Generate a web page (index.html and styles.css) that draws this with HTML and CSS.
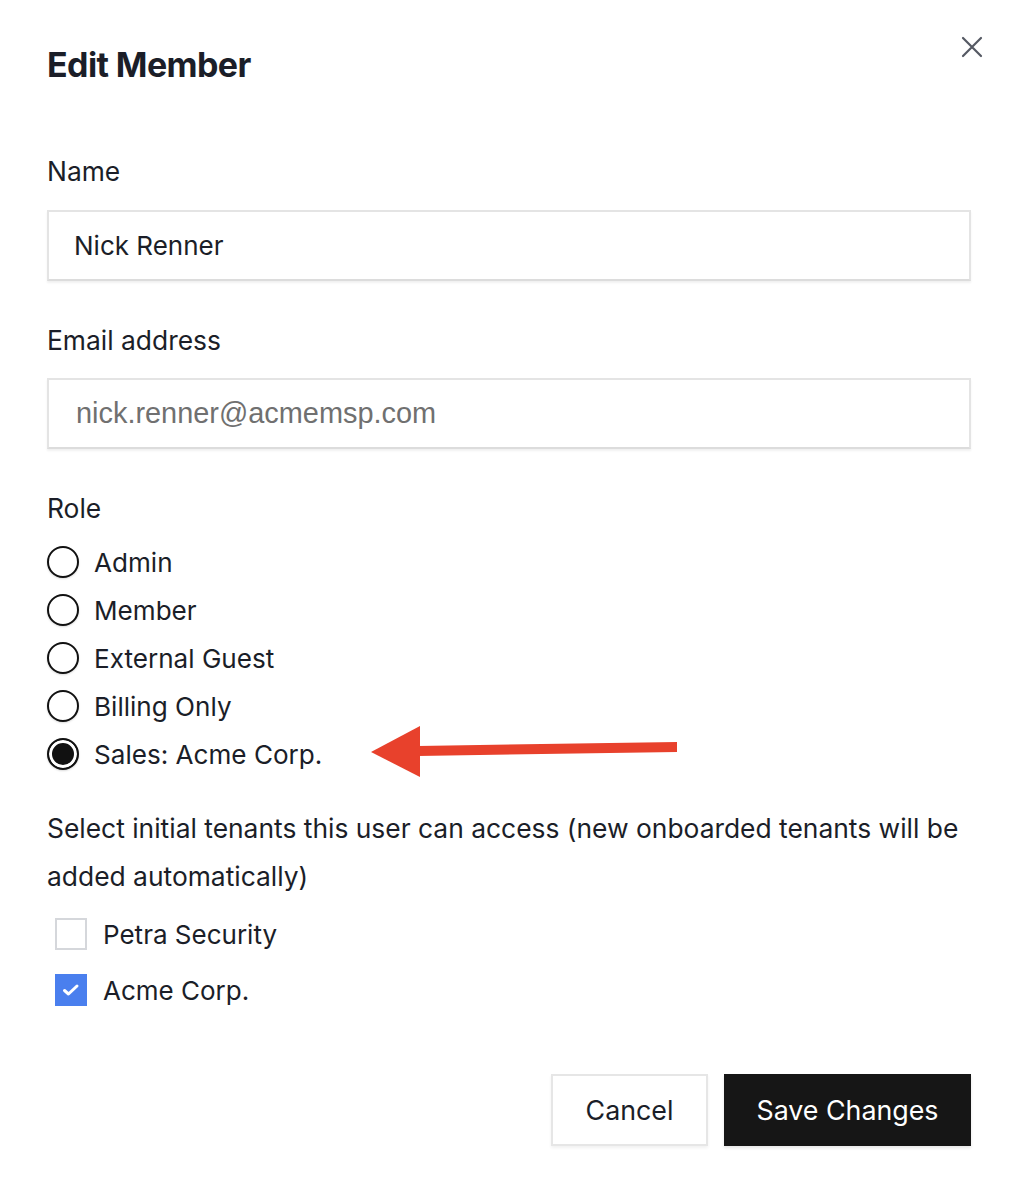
FILE: index.html
```html
<!DOCTYPE html>
<html lang="en">
<head>
<meta charset="utf-8">
<title>Edit Member</title>
<link rel="stylesheet" href="styles.css">
</head>
<body>
<div class="modal">
  <div class="header">
    <h1 class="title">Edit Member</h1>
    <button class="close" aria-label="Close">
      <svg width="22" height="22" viewBox="0 0 22 22"><path d="M2 2 L20 20 M20 2 L2 20" stroke="#555963" stroke-width="2.2" stroke-linecap="round" fill="none"/></svg>
    </button>
  </div>

  <label class="label label-first">Name</label>
  <div class="input">Nick Renner</div>

  <label class="label">Email address</label>
  <div class="input input-email">nick.renner@acmemsp.com</div>

  <label class="label">Role</label>
  <div class="radios">
    <div class="radio-row"><span class="radio"></span><span>Admin</span></div>
    <div class="radio-row"><span class="radio"></span><span>Member</span></div>
    <div class="radio-row"><span class="radio"></span><span>External Guest</span></div>
    <div class="radio-row"><span class="radio"></span><span>Billing Only</span></div>
    <div class="radio-row"><span class="radio checked"></span><span>Sales: Acme Corp.</span></div>
  </div>

  <p class="desc">Select initial tenants this user can access (new onboarded tenants will be added automatically)</p>

  <div class="checks">
    <div class="check-row"><span class="check"></span><span>Petra Security</span></div>
    <div class="check-row"><span class="check checked"><svg width="20" height="16" viewBox="0 0 20 16"><path d="M3.5 8.5 L7.5 12 L16 4" stroke="#fff" stroke-width="3" stroke-linecap="round" stroke-linejoin="round" fill="none"/></svg></span><span>Acme Corp.</span></div>
  </div>

  <div class="actions">
    <button class="btn btn-cancel">Cancel</button>
    <button class="btn btn-save">Save Changes</button>
  </div>

  <svg class="arrow" width="320" height="60" viewBox="0 0 320 60">
    <polygon points="1,26 50,0 50,51" fill="#e8412c"/>
    <polygon points="48,20 307,16 307,26 48,30" fill="#e8412c"/>
  </svg>
</div>
</body>
</html>
```

FILE: styles.css
```css
* { box-sizing: border-box; }
html, body { margin: 0; padding: 0; background: #fff; }
body {
  font-family: Inter, "Noto Sans", sans-serif;
  color: #1b1e28;
  width: 1016px;
}
.modal {
  position: relative;
  width: 1016px;
  padding: 45px 45px 40px 47px;
  display: flex;
  flex-direction: column;
}
.header {
  display: flex;
  justify-content: space-between;
  align-items: flex-start;
}
.title {
  margin: 0;
  font-size: 34px;
  line-height: 40px;
  font-weight: 700;
  letter-spacing: -0.6px;
}
.close {
  border: 0;
  background: none;
  padding: 0;
  margin: -9px -12px 0 0;
  width: 22px;
  height: 22px;
  cursor: pointer;
}
.close svg { display: block; }
.label {
  display: block;
  font-size: 26.4px;
  line-height: 32px;
  margin-top: 43px;
  margin-bottom: 22px;
}
.label-first { margin-top: 70px; margin-bottom: 23px; }
.input {
  width: 924px;
  height: 71px;
  border: 2px solid #e4e4e4;
  border-bottom-color: #dcdcdc;
  box-shadow: 0 2px 2px rgba(0,0,0,0.06);
  padding: 0 0 0 25px;
  display: flex;
  align-items: center;
  font-size: 26px;
  color: #1b1e28;
}
.input-email {
  font-family: "Liberation Sans", Arial, sans-serif;
  color: #707070;
  font-size: 28.9px;
  padding-left: 27px;
}
.radios {
  margin-top: -8px;
  display: flex;
  flex-direction: column;
}
.radio-row {
  height: 48px;
  display: flex;
  align-items: center;
  gap: 15px;
  font-size: 26.1px;
}
.radio {
  width: 32px;
  height: 32px;
  border-radius: 50%;
  border: 2px solid #111;
  background: #fff;
  flex: none;
  box-shadow: 0 1px 2px rgba(0,0,0,0.15);
}
.radio.checked {
  background: #111;
  box-shadow: inset 0 0 0 3px #fff, 0 1px 2px rgba(0,0,0,0.15);
}
.desc {
  margin: 26px 0 0 0;
  font-size: 26.4px;
  line-height: 48px;
}
.checks {
  margin-top: 6px;
  padding-left: 8px;
  display: flex;
  flex-direction: column;
}
.check-row {
  height: 56px;
  display: flex;
  align-items: center;
  gap: 16px;
  font-size: 26px;
}
.check {
  width: 32px;
  height: 32px;
  border: 2px solid #d5d7db;
  background: #fff;
  flex: none;
  display: flex;
  align-items: center;
  justify-content: center;
}
.check.checked {
  background: #4a7fee;
  border-color: #4a7fee;
}
.check svg { display: block; }
.actions {
  margin-top: 56px;
  display: flex;
  justify-content: flex-end;
  gap: 16px;
  width: 924px;
}
.btn {
  height: 72px;
  font-family: Inter, "Noto Sans", sans-serif;
  font-size: 26.8px;
  cursor: pointer;
}
.btn-cancel {
  width: 157px;
  background: #fff;
  border: 2px solid #e6e6e6;
  color: #1b1e28;
  box-shadow: 0 2px 3px rgba(0,0,0,0.06);
}
.btn-save {
  width: 247px;
  background: #161616;
  border: 0;
  color: #fff;
  box-shadow: 0 2px 3px rgba(0,0,0,0.1);
}
.arrow {
  position: absolute;
  left: 370px;
  top: 726px;
}
```
